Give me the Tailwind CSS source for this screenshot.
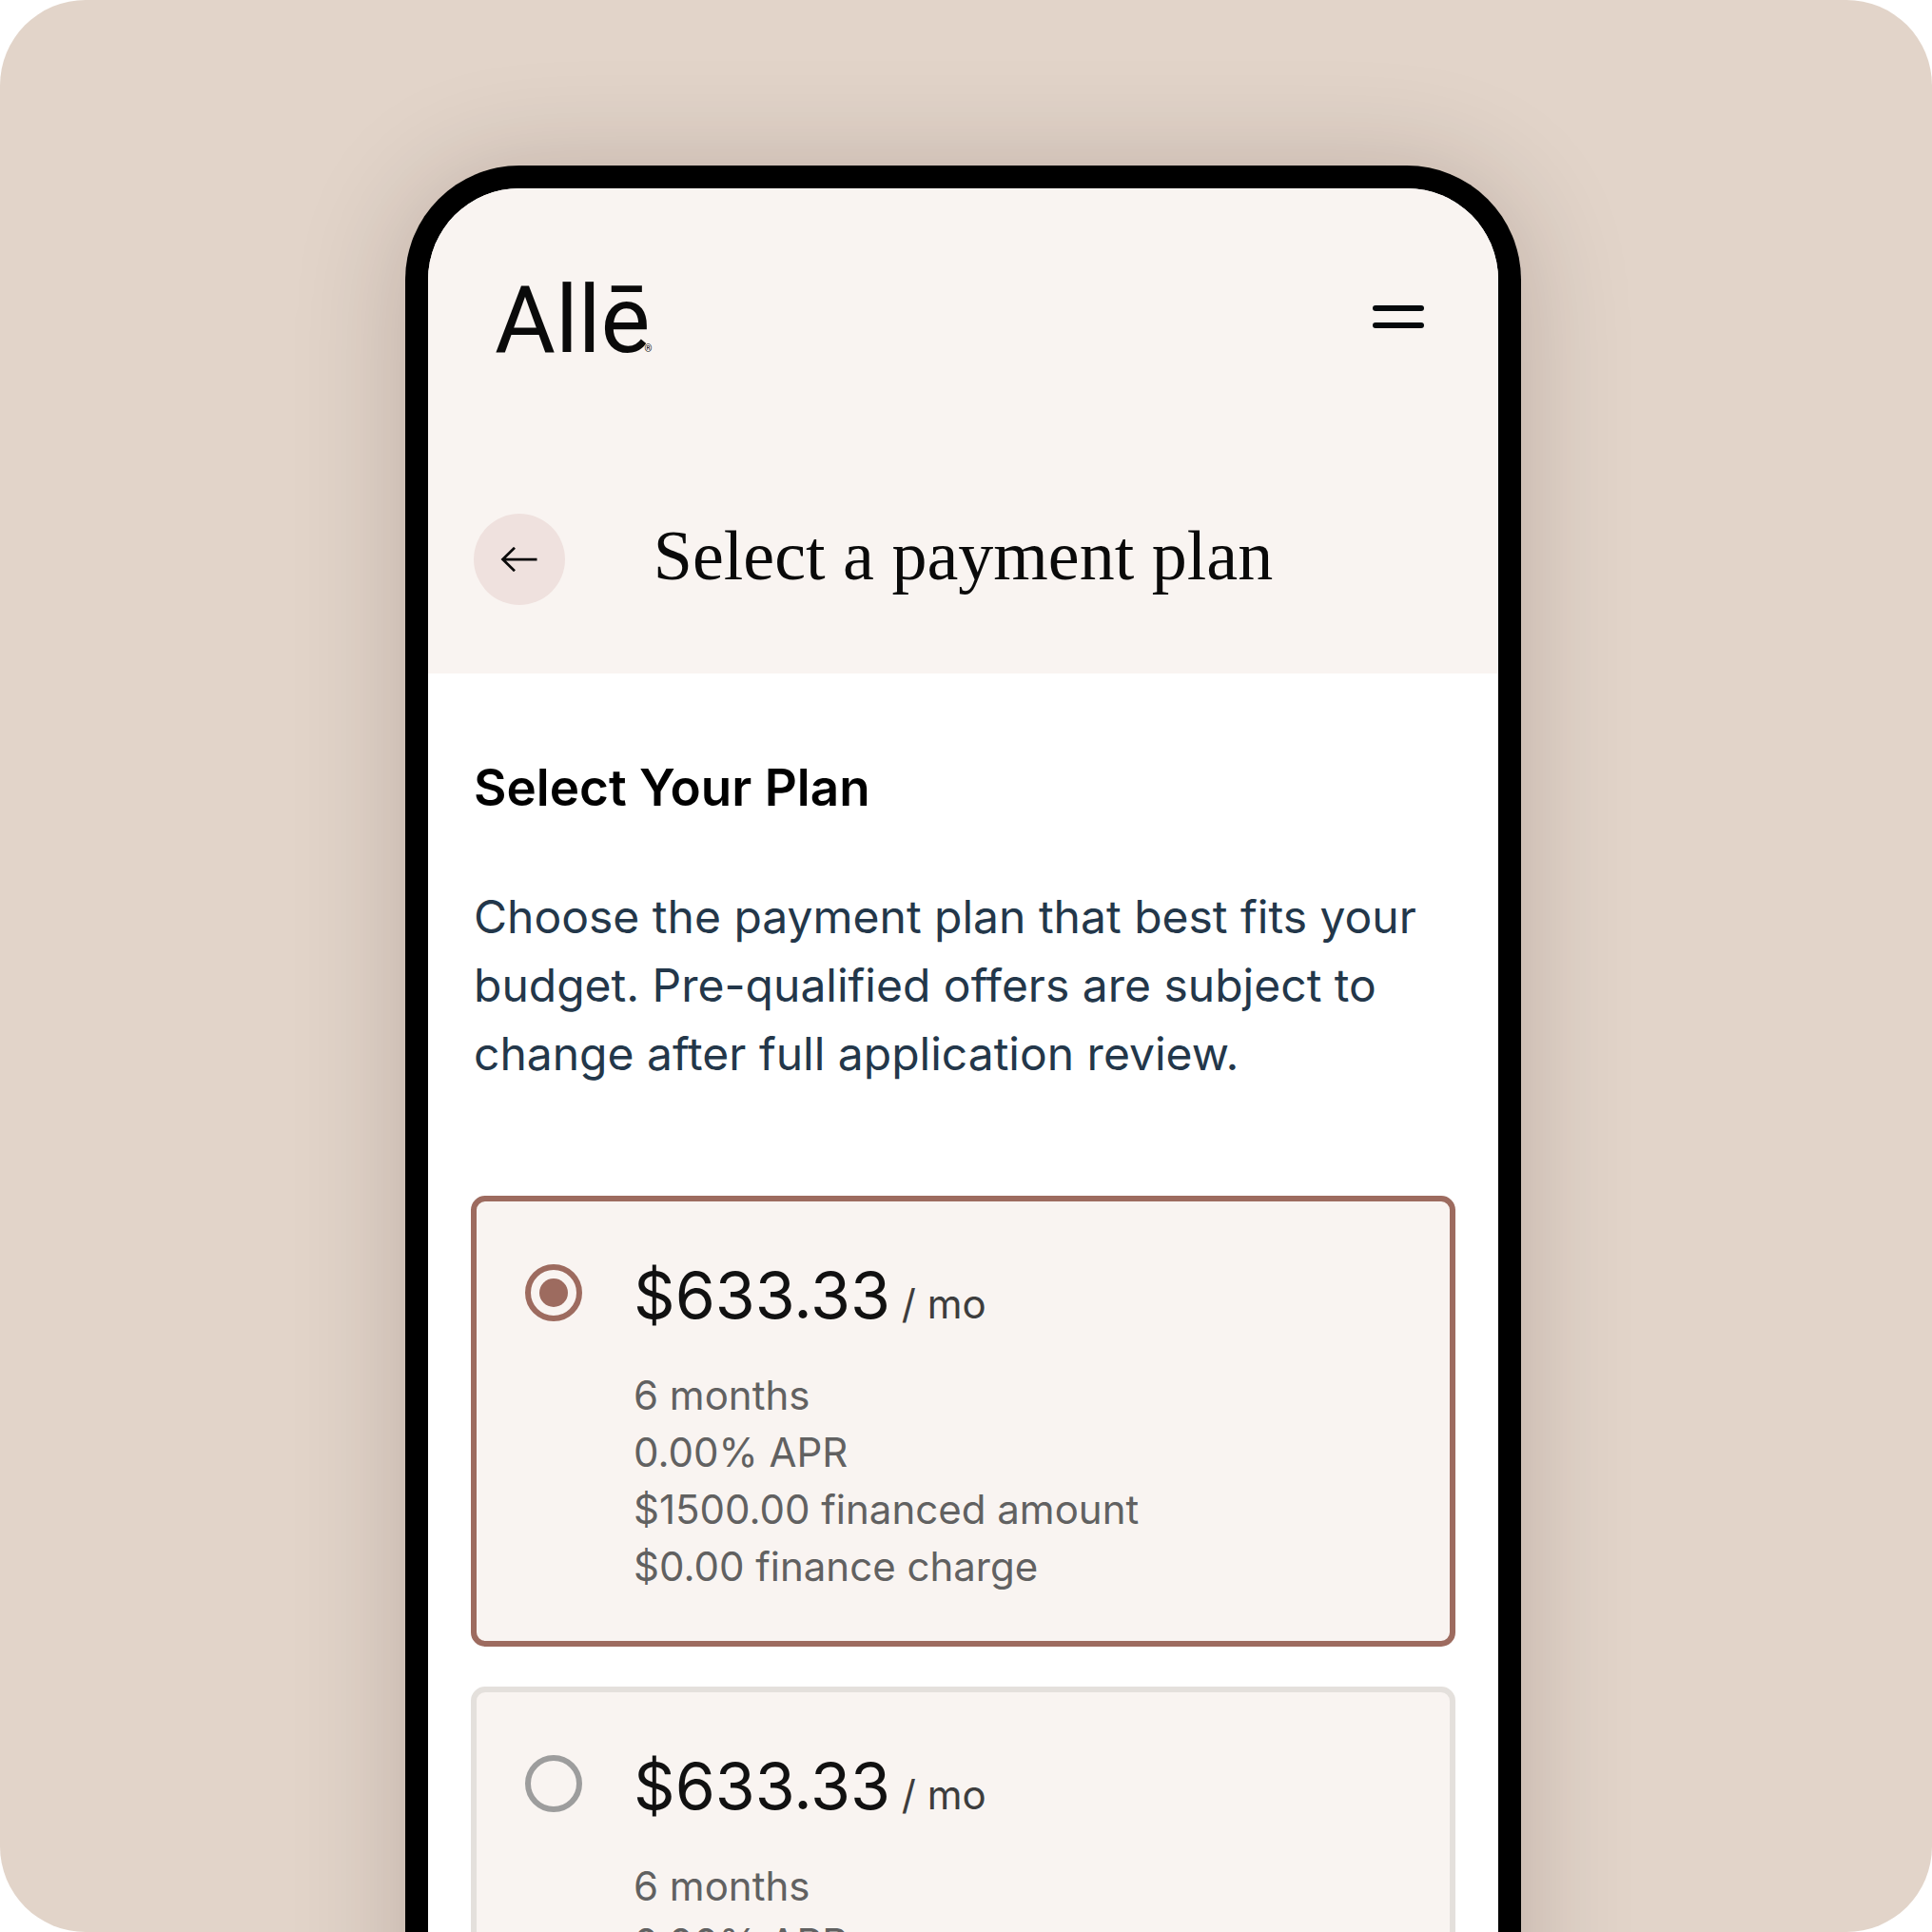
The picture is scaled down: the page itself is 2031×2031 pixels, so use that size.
<!DOCTYPE html>
<html lang="en">
<head>
    <meta charset="UTF-8" />
    <meta name="viewport" content="width=device-width, initial-scale=1.0" />
    <title>Select a payment plan</title>
    <script src="https://cdn.jsdelivr.net/npm/@tailwindcss/browser@4"></script>
</head>
<body class="bg-white font-['Inter',sans-serif]">

<main class="h-screen overflow-hidden rounded-[90px] bg-[#e2d4c9] pt-[174px] pr-1.5">

    <!-- Phone -->
    <div class="mx-auto w-full max-w-[1173px] overflow-hidden rounded-t-[120px] border-24 border-b-0 border-black bg-white shadow-[0_6px_120px_rgba(30,0,0,0.19)]">

        <header class="bg-[#f9f4f1] px-12 pt-20 pb-18">
            <div class="flex h-[110px] items-center justify-between pr-[30px] pl-[22px]">
                <a href="#" class="flex items-baseline pt-2 font-['Roboto',sans-serif] text-[98px] leading-none text-[#0a0a0a]">Allē<span class="-ml-1.5 text-[10px]">®</span></a>
                <button type="button" aria-label="Menu" class="flex w-[54px] flex-col gap-3">
                    <span class="h-1.5 w-full rounded-full bg-[#060a0d]"></span>
                    <span class="h-1.5 w-full rounded-full bg-[#060a0d]"></span>
                </button>
            </div>

            <div class="mt-[152px] grid grid-cols-[96px_1fr_96px] items-center">
                <button type="button" aria-label="Back" class="flex size-24 items-center justify-center rounded-full bg-[#efe1de]">
                    <svg class="h-[26px] w-10" viewBox="0 0 40 26" fill="none" stroke="#0a0a0a" stroke-width="2.75">
                        <path d="M38.5 13H2M15 .8L2.5 13 15 25.2" />
                    </svg>
                </button>
                <h1 class="pb-2 text-center font-['Liberation_Serif',serif] text-[74px] leading-22 text-[#0a0a0a]">Select a payment plan</h1>
            </div>
        </header>

        <section class="px-12 pt-[84px]">
            <h2 class="text-[53px] leading-18 font-semibold text-black">Select Your Plan</h2>
            <p class="mt-16 text-[48px] leading-18 text-[#23374a]">Choose the payment plan that best fits your budget. Pre-qualified offers are subject to change after full application review.</p>
        </section>

        <form class="flex flex-col gap-[42px] px-[45px] pt-[113px]">
            <label class="flex h-[474px] gap-[54px] rounded-[15px] border-6 border-[#e4e0dc] bg-[#f9f4f1] px-[51px] pt-[54px] has-checked:border-[#9d6b5f]">
                <input type="radio" name="plan" checked class="mt-3 size-[60px] shrink-0 appearance-none rounded-full border-6 border-[#9d9d9d] bg-clip-content p-[9px] checked:border-[#9d6b5f] checked:bg-[#9d6b5f]" />
                <span class="flex flex-col">
                    <span class="text-[68px] leading-22 text-[#111111]">$633.33<span class="text-[42px] text-[#3d3d3d]"> / mo</span></span>
                    <span class="mt-[22px] text-[42px] leading-15 text-[#616161]">6 months<br />0.00% APR<br />$1500.00 financed amount<br />$0.00 finance charge</span>
                </span>
            </label>
            <label class="flex h-[474px] gap-[54px] rounded-[15px] border-6 border-[#e4e0dc] bg-[#f9f4f1] px-[51px] pt-[54px] has-checked:border-[#9d6b5f]">
                <input type="radio" name="plan" class="mt-3 size-[60px] shrink-0 appearance-none rounded-full border-6 border-[#9d9d9d] bg-clip-content p-[9px] checked:border-[#9d6b5f] checked:bg-[#9d6b5f]" />
                <span class="flex flex-col">
                    <span class="text-[68px] leading-22 text-[#111111]">$633.33<span class="text-[42px] text-[#3d3d3d]"> / mo</span></span>
                    <span class="mt-[22px] text-[42px] leading-15 text-[#616161]">6 months<br />0.00% APR<br />$1500.00 financed amount<br />$0.00 finance charge</span>
                </span>
            </label>
        </form>
    </div>
</main>

</body>
</html>
